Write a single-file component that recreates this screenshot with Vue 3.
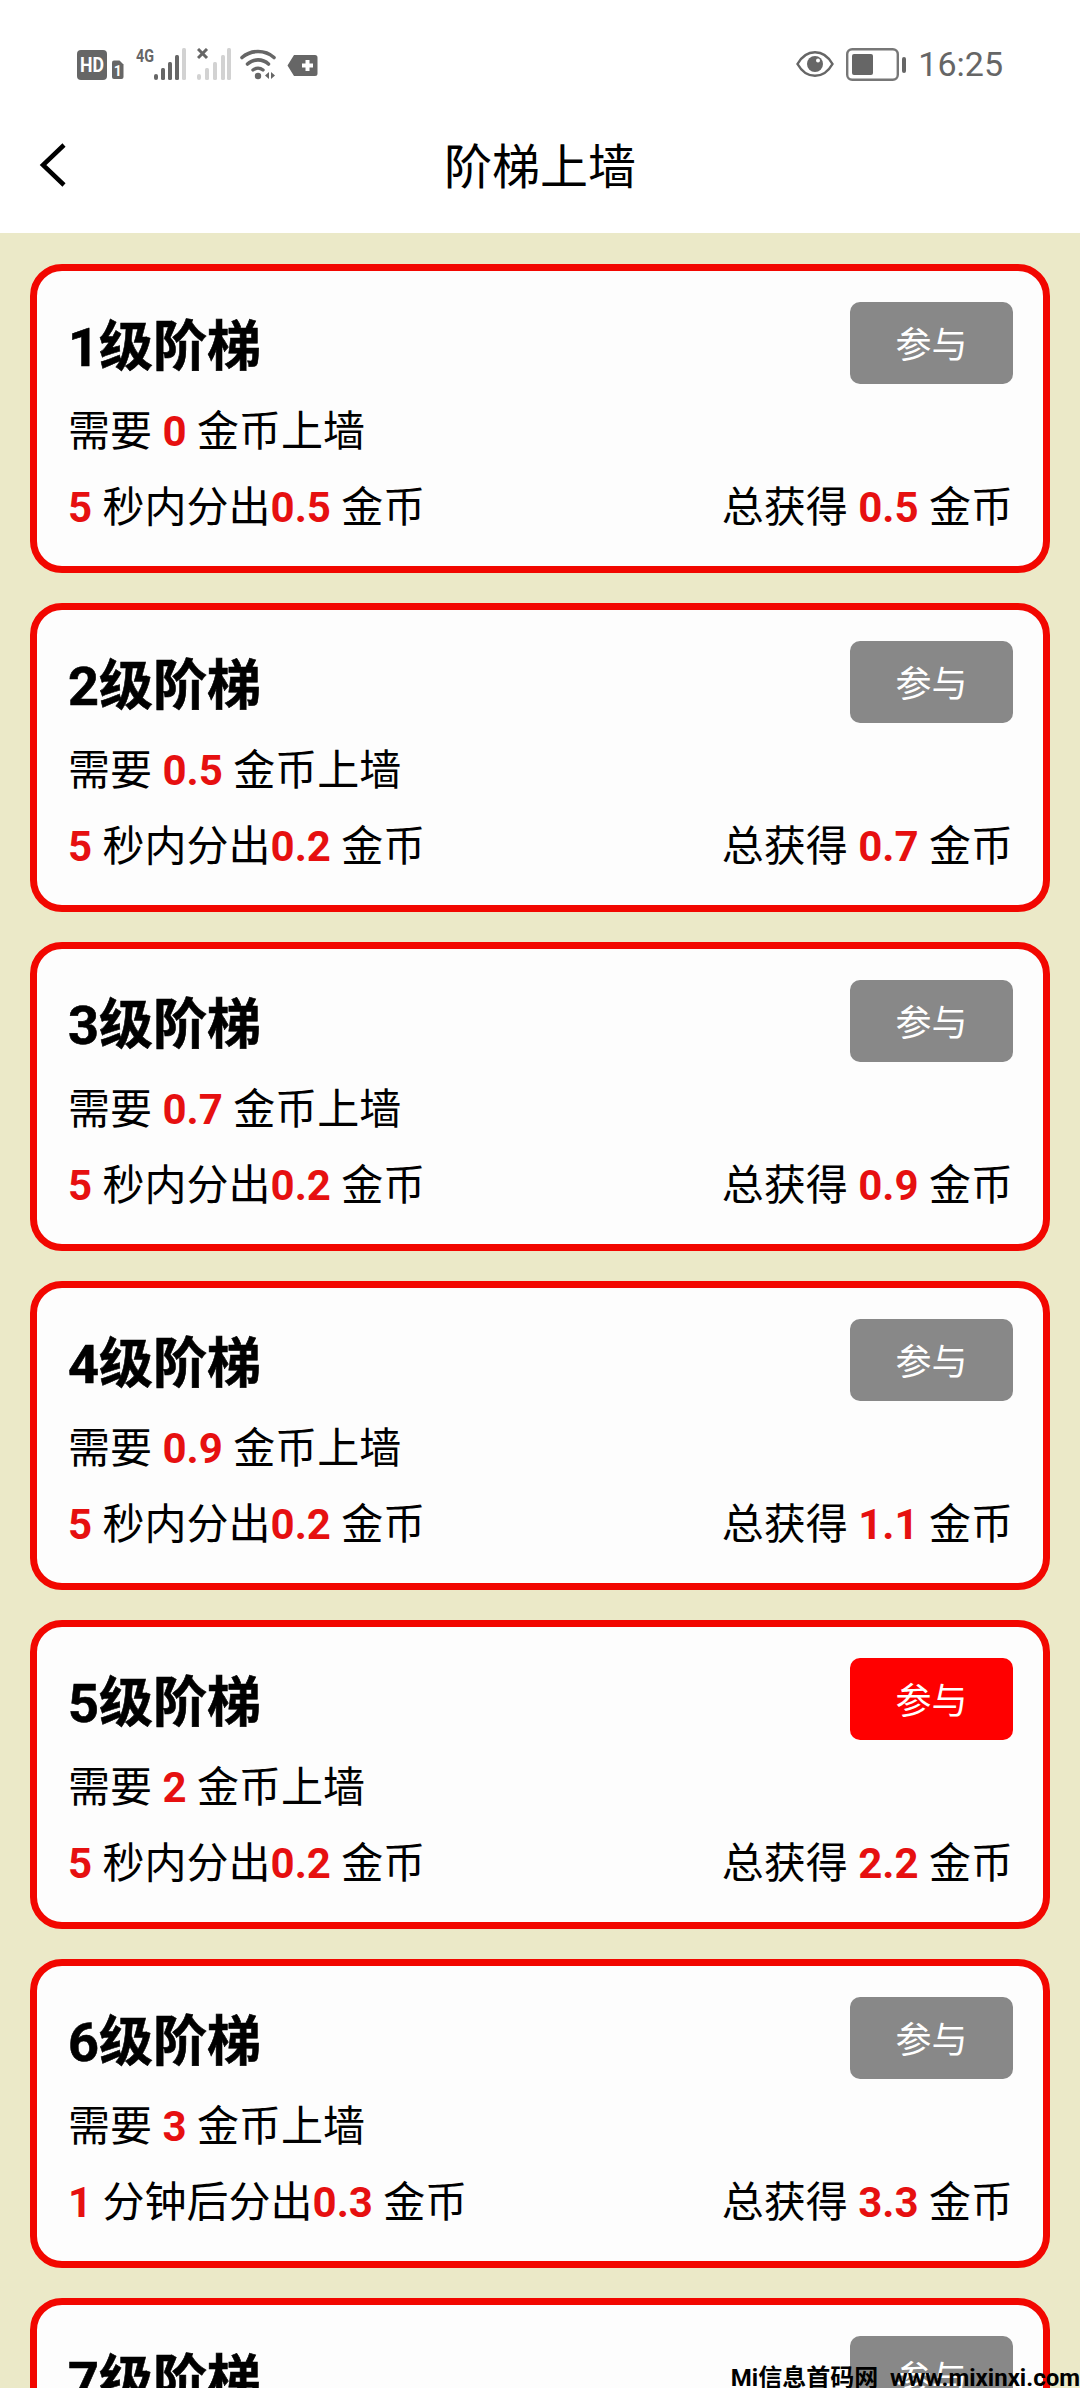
<template>
  <div class="page">
    <div class="status-bar">
      <div class="status-left">
        <svg width="48" height="30" viewBox="0 0 48 30">
          <rect x="0" y="0" width="30" height="30" rx="4" fill="#666" />
          <text x="15" y="22" text-anchor="middle" textLength="24" lengthAdjust="spacingAndGlyphs" class="hd-text">HD</text>
          <path d="M35 12.500a2 2 0 0 1 2-2h5.500l4 4V27a2 2 0 0 1-2 2H37a2 2 0 0 1-2-2z" fill="#666" />
          <text x="40.700" y="26" text-anchor="middle" class="sim-text">1</text>
        </svg>
        <svg width="50" height="32" viewBox="0 0 50 32">
          <text x="0" y="14" textLength="18" lengthAdjust="spacingAndGlyphs" class="net-text">4G</text>
          <rect x="18" y="26" width="4" height="6" rx="2" fill="#666" />
          <rect x="25" y="20" width="4" height="12" rx="1.500" fill="#666" />
          <rect x="32" y="14" width="4" height="18" rx="1.500" fill="#666" />
          <rect x="39" y="7" width="4" height="25" rx="1.500" fill="#666" />
          <rect x="46" y="0" width="4" height="32" rx="1.500" fill="#d2d2d2" />
        </svg>
        <svg width="34" height="32" viewBox="0 0 34 32">
          <path d="M1 1l9 9M10 1l-9 9" stroke="#666" stroke-width="3" fill="none" />
          <rect x="0" y="26" width="4" height="6" rx="2" fill="#d2d2d2" />
          <rect x="8" y="20" width="4" height="12" rx="1.500" fill="#d2d2d2" />
          <rect x="16" y="14" width="4" height="18" rx="1.500" fill="#d2d2d2" />
          <rect x="24" y="7" width="4" height="25" rx="1.500" fill="#d2d2d2" />
          <rect x="30" y="0" width="4" height="32" rx="1.500" fill="#d2d2d2" />
        </svg>
        <svg class="ic-wifi" width="38" height="32" viewBox="0 0 38 32">
          <path d="M2 9.500C11 1.500 25 1.500 34 9.500" stroke="#666" stroke-width="3.600" fill="none" stroke-linecap="round" />
          <path d="M7.500 16C13.500 10.500 22.500 10.500 28.500 16" stroke="#666" stroke-width="3.600" fill="none" stroke-linecap="round" />
          <path d="M13 22c3-2.500 7-2.500 10 0" stroke="#666" stroke-width="3.400" fill="none" stroke-linecap="round" />
          <circle cx="18" cy="28" r="3.200" fill="#666" />
          <path d="M29 24v7l-4-3.500zM31 24v7l4-3.500z" fill="#666" />
        </svg>
        <svg class="ic-tag" width="31" height="23" viewBox="0 0 31 23">
          <path d="M7 1h21a2.500 2.500 0 0 1 2.500 2.500v16A2.500 2.500 0 0 1 28 22H7l-6.500-10.500z" fill="#666" />
          <path d="M15 11.500h11M20.500 6v11" stroke="#fff" stroke-width="4" />
        </svg>
      </div>
      <div class="status-right">
        <svg width="38" height="28" viewBox="0 0 38 28">
          <path d="M1.500 14C6 6 12 2.200 19 2.200S32 6 36.500 14C32 22 26 25.800 19 25.800S6 22 1.500 14z" stroke="#666" stroke-width="2.500" fill="none" />
          <circle cx="19" cy="14" r="8" fill="#666" />
          <circle cx="22" cy="10.500" r="2" fill="#fff" />
        </svg>
        <svg width="60" height="33" viewBox="0 0 60 33">
          <rect x="1.200" y="1.200" width="50.600" height="30.600" rx="5" stroke="#777" stroke-width="2.400" fill="none" />
          <rect x="6" y="6" width="21" height="21" rx="2" fill="#666" />
          <rect x="56" y="9" width="4" height="16" rx="2" fill="#666" />
        </svg>
        <span class="clock">16:25</span>
      </div>
    </div>

    <div class="nav-bar">
      <svg class="back" width="28" height="44" viewBox="0 0 28 44">
        <path d="M25 2L4 22l21 20" stroke="#000" stroke-width="4.500" fill="none" />
      </svg>
      <span class="nav-title">阶梯上墙</span>
    </div>

    <div class="list">
      <div v-for="item in levels" :key="item.level" class="card">
        <div class="card-top">
          <span class="card-title">{{ item.level }}级阶梯</span>
          <span class="join" :class="{ active: item.active }">参与</span>
        </div>
        <div class="need">需要 <b>{{ item.need }}</b> 金币上墙</div>
        <div class="card-bottom">
          <span><b>{{ item.time }}</b> {{ item.unit }}<b>{{ item.split }}</b> 金币</span>
          <span>总获得 <b>{{ item.total }}</b> 金币</span>
        </div>
      </div>
    </div>

    <div class="watermark">Mi信息首码网&nbsp; www.mixinxi.com</div>
  </div>
</template>

<script setup>
const levels = [
  { level: 1, need: '0', time: '5', unit: '秒内分出', split: '0.5', total: '0.5' },
  { level: 2, need: '0.5', time: '5', unit: '秒内分出', split: '0.2', total: '0.7' },
  { level: 3, need: '0.7', time: '5', unit: '秒内分出', split: '0.2', total: '0.9' },
  { level: 4, need: '0.9', time: '5', unit: '秒内分出', split: '0.2', total: '1.1' },
  { level: 5, need: '2', time: '5', unit: '秒内分出', split: '0.2', total: '2.2', active: true },
  { level: 6, need: '3', time: '1', unit: '分钟后分出', split: '0.3', total: '3.3' },
  { level: 7, need: '5', time: '1', unit: '分钟后分出', split: '0.5', total: '5.5' }
]
</script>

<style scoped>
.page {
  position: relative;
  width: 1080px;
  height: 2388px;
  overflow: hidden;
  background: #ebe9c8;
  font-family: Roboto, "Noto Sans CJK SC", sans-serif;
  color: #000;
}
.status-bar {
  height: 108px;
  box-sizing: border-box;
  padding: 48px 77px 0 77px;
  background: #fff;
  display: flex;
  justify-content: space-between;
  align-items: flex-start;
}
.status-left {
  display: flex;
  align-items: flex-end;
  gap: 11px;
  height: 32px;
}
.status-right {
  display: flex;
  align-items: center;
  gap: 12px;
  height: 32px;
}
.hd-text {
  font: 700 20px Roboto, sans-serif;
  fill: #fff;
}
.sim-text {
  font: 700 14px Roboto, sans-serif;
  fill: #fff;
}
.net-text {
  font: 700 18px Roboto, sans-serif;
  fill: #666;
}
.ic-wifi {
  margin-left: -2px;
}
.ic-tag {
  margin-left: -2px;
  margin-bottom: 3px;
}
.clock {
  font-size: 34px;
  color: #666;
}
.nav-bar {
  position: relative;
  height: 125px;
  background: #fff;
  display: flex;
  align-items: center;
  justify-content: center;
  padding-bottom: 16px;
  box-sizing: border-box;
}
.back {
  position: absolute;
  left: 39px;
  top: 35px;
}
.nav-title {
  font-size: 48px;
}
.list {
  padding: 31px 30px 0;
  display: flex;
  flex-direction: column;
  gap: 30px;
}
.card {
  height: 309px;
  flex: none;
  box-sizing: border-box;
  border: 7px solid #f20700;
  border-radius: 32px;
  background: #fdfdfd;
  padding: 31px 30px 0 31px;
  font-size: 42px;
}
.card-top {
  display: flex;
  justify-content: space-between;
  align-items: flex-start;
  height: 100px;
}
.card-title {
  font-size: 54px;
  font-weight: 700;
  line-height: 92px;
  -webkit-text-stroke: 0.6px #000;
}
.join {
  width: 163px;
  height: 82px;
  line-height: 88px;
  border-radius: 10px;
  background: #888;
  color: #fff;
  font-size: 36px;
  text-align: center;
}
.join.active {
  background: #ff0000;
}
.need {
  line-height: 60px;
}
.card-bottom {
  display: flex;
  justify-content: space-between;
  line-height: 60px;
  margin-top: 16px;
}
b {
  color: #e61010;
  font-weight: 700;
}
.watermark {
  position: absolute;
  right: 0;
  bottom: 0;
  font-size: 24px;
  font-weight: 700;
  line-height: 20px;
  white-space: nowrap;
  color: #000;
}
</style>

<style>
html, body {
  margin: 0;
  background: #ebe9c8;
}
</style>
